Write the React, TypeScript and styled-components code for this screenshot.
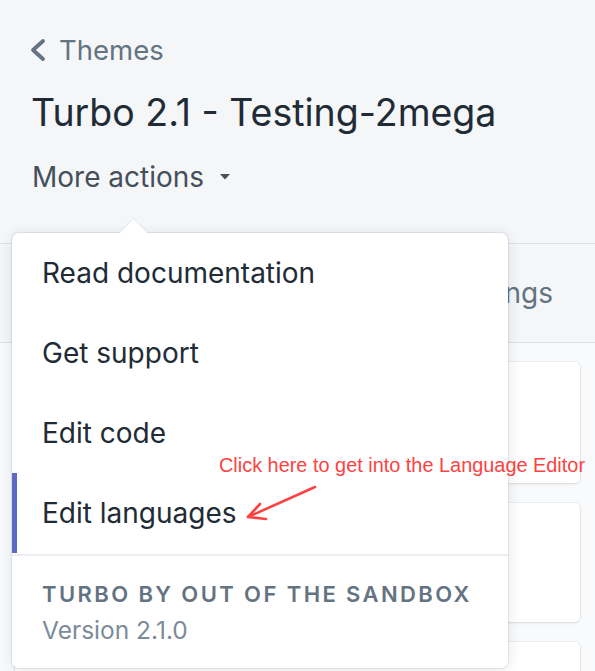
import React from 'react'
import styled, { createGlobalStyle } from 'styled-components'

const GlobalStyle = createGlobalStyle`
    html, body {
        margin: 0;
        padding: 0;
        background: #f4f6f8;
        font-family: Inter, "Noto Sans", sans-serif;
        color: #212b36;
    }
`

const Page = styled.div`
    position: relative;
    width: 595px;
    height: 671px;
    overflow: hidden;
    background: #f4f6f8;
`

const Header = styled.header`
    height: 244px;
    box-sizing: border-box;
    padding: 34px 33px 0;
    border-bottom: 1px solid #dfe3e8;
`

const Breadcrumb = styled.a`
    display: flex;
    align-items: center;
    gap: 13px;
    height: 32px;
    margin-left: -4px;
    font-size: 27.5px;
    color: #637381;
`

const Title = styled.h1`
    margin: 27px 0 0 -2px;
    font-size: 37.5px;
    line-height: 40px;
    font-weight: 400;
    color: #212b36;
`

const ActionsButton = styled.div`
    display: flex;
    align-items: center;
    gap: 16px;
    margin: 28px 0 0 -1px;
    height: 32px;
    font-size: 28px;
    color: #454f5b;
`

const Tabs = styled.nav`
    display: flex;
    justify-content: flex-end;
    align-items: center;
    height: 98px;
    padding-right: 42px;
    border-bottom: 1px solid #dfe3e8;
`

const Tab = styled.span`
    font-size: 28px;
    color: #637381;
`

const CardList = styled.div`
    display: flex;
    flex-direction: column;
    gap: 20px;
    padding: 19px 15px 0;
    background: #f9fafb;
`

const Card = styled.div<{ h: number }>`
    display: flex;
    align-items: center;
    gap: 32px;
    height: ${props => props.h}px;
    padding-left: 45px;
    background: #fff;
    border-radius: 5px;
    box-shadow: 0 0 0 1px rgba(63, 63, 68, 0.05), 0 1px 3px rgba(63, 63, 68, 0.12);
`

const CardIcon = styled.div`
    width: 26px;
    height: 18px;
    border: 1px solid #c4cdd5;
    border-radius: 2px;
`

const CardTitle = styled.span`
    font-size: 28px;
    color: #212b36;
`

const Menu = styled.div`
    position: absolute;
    left: 12px;
    top: 233px;
    width: 496px;
    height: 435px;
    background: #fff;
    border-radius: 7px;
    box-shadow: 0 0 0 1px rgba(6, 44, 82, 0.08), 0 2px 14px rgba(33, 43, 54, 0.12);
    display: flex;
    flex-direction: column;

    &::before {
        content: '';
        position: absolute;
        left: 112px;
        top: -10px;
        width: 19px;
        height: 19px;
        background: #fff;
        transform: rotate(45deg);
        box-shadow: -1px -1px 0 rgba(6, 44, 82, 0.06);
    }
`

const MenuItem = styled.div<{ active?: boolean }>`
    position: relative;
    display: flex;
    align-items: center;
    height: 80px;
    padding-left: 25px;
    font-size: 28px;
    color: #212b36;
    border-left: 5px solid ${props => props.active ? '#5c6ac4' : 'transparent'};
    border-radius: ${props => props.active ? '0' : '7px 7px 0 0'};
`

const MenuFooter = styled.div`
    flex: 1;
    border-top: 2px solid #ebeef1;
    border-radius: 0 0 7px 7px;
    background: rgba(255, 255, 255, 0.96);
    padding: 22px 0 0 30px;
    margin-top: 1px;
`

const FooterHeading = styled.div`
    font-size: 22px;
    font-weight: 600;
    letter-spacing: 2.4px;
    text-transform: uppercase;
    color: #637381;
    line-height: 32px;
`

const FooterVersion = styled.div`
    margin-top: 5px;
    font-size: 24.5px;
    color: #7c8b9a;
    line-height: 30px;
`

const Annotation = styled.div`
    position: absolute;
    left: 219px;
    top: 454px;
    font-family: "Liberation Sans", Arial, sans-serif;
    font-size: 19.9px;
    color: #fd4242;
    white-space: nowrap;
`

const ArrowSvg = styled.svg`
    position: absolute;
    left: 240px;
    top: 482px;
`

const menuItems = ['Read documentation', 'Get support', 'Edit code', 'Edit languages']

const App: React.FunctionComponent = () => {
    return (
        <Page>
            <GlobalStyle />
            <Header>
                <Breadcrumb>
                    <svg width="17" height="24" viewBox="0 0 17 24">
                        <polyline points="14,3 4,12 14,21" fill="none" stroke="#637381" strokeWidth="3.8" strokeLinecap="round" strokeLinejoin="round" />
                    </svg>
                    Themes
                </Breadcrumb>
                <Title>Turbo 2.1 - Testing-2mega</Title>
                <ActionsButton>
                    More actions
                    <svg width="10" height="6" viewBox="0 0 10 6">
                        <polygon points="0,0 10,0 5,5.5" fill="#454f5b" />
                    </svg>
                </ActionsButton>
            </Header>
            <Tabs>
                <Tab>Theme settings</Tab>
            </Tabs>
            <CardList>
                <Card h={121} />
                <Card h={119}>
                    <CardIcon />
                    <CardTitle>Mega menu 1</CardTitle>
                </Card>
                <Card h={119} />
            </CardList>
            <Menu>
                {menuItems.map((label, i) => (
                    <MenuItem key={label} active={i === 3}>{label}</MenuItem>
                ))}
                <MenuFooter>
                    <FooterHeading>Turbo by Out of the Sandbox</FooterHeading>
                    <FooterVersion>Version 2.1.0</FooterVersion>
                </MenuFooter>
            </Menu>
            <Annotation>Click here to get into the Language Editor</Annotation>
            <ArrowSvg width="80" height="42" viewBox="0 0 80 42">
                <g fill="none" stroke="#fd4242" strokeWidth="2.6" strokeLinecap="round" strokeLinejoin="round">
                    <line x1="75" y1="5" x2="8" y2="35" />
                    <polyline points="20,22 8,35 26,37" />
                </g>
            </ArrowSvg>
        </Page>
    )
}

export default App
